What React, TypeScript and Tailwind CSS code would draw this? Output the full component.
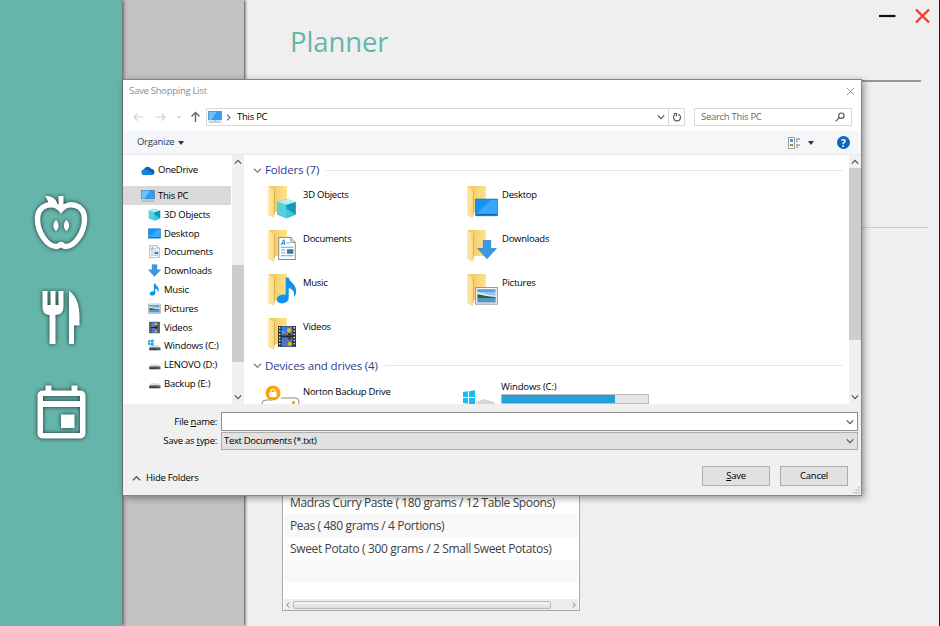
import React from "react";

type Kind = "cloud" | "pc" | "cube" | "desktop" | "doc" | "down" | "music" | "picture" | "video" | "windrive" | "drive";

function Glyph({ kind, className = "h-[14px] w-[14px]" }: { kind: Kind; className?: string }) {
  return (
    <svg viewBox="0 0 16 16" className={`shrink-0 ${className}`}>
      {kind === "cloud" && (
        <>
          <path d="M3.600 12.500a3.400 3.400 0 0 1-.3-6.600A4.600 4.600 0 0 1 11.600 5.500 3.600 3.600 0 0 1 13 12.500z" fill="#0a64b8" />
          <path d="M4 12.500a3 3 0 0 1-1-6 4 4 0 0 1 4.500.6L14.500 12 13 12.500z" fill="#1682d8" />
        </>
      )}
      {kind === "pc" && (
        <>
          <rect x="0.5" y="1.5" width="15" height="9.8" fill="#2f9df0" stroke="#4a7ea6" strokeWidth="0.7" />
          <path d="M1 2h9L4 11H1z" fill="#6cc3fb" />
          <path d="M6.5 11.5h3v1.3h-3z" fill="#b8c8d4" />
          <path d="M1 13.8h14" stroke="#7f9fb8" strokeWidth="1" />
        </>
      )}
      {kind === "cube" && (
        <>
          <path d="M8 .8 15 3v9.5L8 15.5 1 12.5V3z" fill="#22a9c4" />
          <path d="M1 3l7 2.2v10.3l-7-3z" fill="#58d0de" />
          <path d="M8 5.2 15 3v9.5l-7 3z" fill="#1498b8" />
          <path d="M8 .8 15 3 8 5.2 1 3z" fill="#b5eef2" />
          <path d="m8 8 7 4.500-7 3-7-3z" fill="#4fd0e4" opacity=".75" />
        </>
      )}
      {kind === "desktop" && (
        <>
          <rect x="0.5" y="2.2" width="15" height="11.5" fill="#1593f2" stroke="#0a70c4" strokeWidth="0.6" />
          <path d="M1 12.300 11 2.800h4.200v9.500z" fill="#37a8fa" />
          <path d="M1 13h14" stroke="#0b63af" strokeWidth=".7" />
        </>
      )}
      {kind === "doc" && (
        <>
          <path d="M2 .7h8.800L14 4v11.300H2z" fill="#fff" stroke="#888" strokeWidth=".7" />
          <path d="M10.800.7V4H14" fill="#ddd" stroke="#888" strokeWidth=".6" />
          <path d="m3.700 5.800 1.700-3.400h.4l.6 3.400M4.300 4.700h2" fill="none" stroke="#2588d4" strokeWidth=".7" />
          <path d="M7.500 4.300H10M3.600 7.200h9M3.600 9h3.300M3.600 10.800h3.300M3.600 12.800h9" stroke="#4b9bd6" strokeWidth=".6" />
          <path d="M8 8.500h4.600v2.900H8z" fill="#367ba8" />
        </>
      )}
      {kind === "down" && <path d="M5 .8h6v6.400h4.500L8 15.400.5 7.200H5z" fill="#3b98e5" stroke="#2878c0" strokeWidth=".5" />}
      {kind === "music" && (
        <path d="M7.200.5h1.700c.4 2.600 5.300 4.200 4.300 9.200-.2.8-.7 1.600-1.200 2 .7-3-.8-4.600-3-5v5.800c0 1.700-1.800 3-4 3-1.800 0-3-.9-3-2.200 0-1.700 2-3 4.100-3 .4 0 .8 0 1.100.2z" fill="#0f93ef" />
      )}
      {kind === "picture" && (
        <>
          <rect x=".5" y="2.5" width="15" height="11.5" fill="#fff" stroke="#909090" strokeWidth=".7" />
          <path d="M1.700 3.700h12.600v9H1.700z" fill="#8cc4ee" />
          <path d="M1.700 3.700h12.600v1.800H1.700z" fill="#5b9fe4" />
          <path d="M1.700 5.800c4 .2 7 2 12.600 2.300v1.500H1.700z" fill="#dcecf5" />
          <path d="M1.700 7.300c3 0 5 1.200 12.600 1.800v1H1.700z" fill="#24604f" />
          <path d="M1.700 10c4-.6 8-.2 12.600-.2v3H1.700z" fill="#5c95b6" />
        </>
      )}
      {kind === "video" && (
        <>
          <path d="M1.500 1h13v14h-13z" fill="#25272b" />
          <path d="M4 1.300h8v6.100H4zm0 7.200h8v6.200H4z" fill="#3d78dc" />
          <path d="M2.700 1.800v13M13.300 1.800v13" stroke="#e2e2e2" strokeWidth="1.100" strokeDasharray="1 1.100" />
          <path d="M4.200 4.500h2v1.400h-2z" fill="#3cc49c" />
          <path d="M6.500 5.600h2V7h-2zm0 7.400h2v1.400h-2z" fill="#e6532b" />
          <circle cx="9.600" cy="4" r="1.600" fill="#e8b814" />
          <circle cx="10" cy="12.800" r="1.400" fill="#e8b814" />
          <path d="M8.800 5.800h2v1.500h-2zM8.700 8.800h2.200v1H8.700z" fill="#3f2f22" />
        </>
      )}
      {(kind === "windrive" || kind === "drive") && (
        <>
          <path d="M3.500 7.800h9.300L15.200 11H1.500z" fill="#dadada" />
          <path d="M1.500 10.500h13.800v3.400H1.500z" fill="#3c4043" />
          <path d="M2 11.300h12.800" stroke="#777" strokeWidth=".6" />
          <path d="M12 12.300h2" stroke="#46dc55" />
        </>
      )}
      {kind === "windrive" && <path d="m0 1.700 2.800-.4v2.900H0zm3.400-.5L7 .7v3.500H3.400zM0 4.800h2.800v2.800L0 7.200zm3.400 0H7v3.400l-3.600-.5z" fill="#16aae8" />}
    </svg>
  );
}

function Folder({ kind }: { kind: Kind }) {
  const flat = kind === "desktop" || kind === "picture";
  return (
    <svg viewBox="0 0 32 36" className="mt-[-2px] h-[36px] w-[32px] shrink-0">
      <defs>
        <linearGradient id="folder-back" x1="0" x2="1">
          <stop stopColor="#eec75c" />
          <stop offset="1" stopColor="#ffe28f" />
        </linearGradient>
        <linearGradient id="folder-front" x1="0" x2="1">
          <stop stopColor="#ffeaad" />
          <stop offset="1" stopColor="#f9d97f" />
        </linearGradient>
      </defs>
      <path d="M2 2h18v26H8L2 25z" fill="url(#folder-back)" />
      <path d="m1 2 6 4v28l-6-3z" fill="url(#folder-front)" />
      <path d="M7 6.500 8 7v22l-1 3z" fill="#dcb44f" />
      <path d="M8 29h3v3l-2 1z" fill="#fff" />
      <foreignObject
        x={kind === "down" ? 11 : 9}
        y={flat ? 12 : kind === "down" ? 11 : kind === "music" ? 5 : kind === "cube" ? 14 : 8}
        width="23"
        height="28"
      >
        <Glyph
          kind={kind}
          className={
            flat
              ? "h-[23px] w-[23px]"
              : kind === "music"
                ? "h-[27px] w-[22px] scale-125"
                : kind === "cube"
                  ? "h-[21px] w-[21px]"
                  : kind === "down"
                    ? "h-[21px] w-[20px]"
                    : "h-[25px] w-[22px] scale-y-110"
          }
        />
      </foreignObject>
    </svg>
  );
}

function Chevron({ d, className, color = "#555" }: { d: "up" | "down" | "right"; className: string; color?: string }) {
  const paths = { up: "M1 7l4-4 4 4", down: "M1 3l4 4 4-4", right: "M3 1l4 4-4 4" };
  return (
    <svg viewBox="0 0 10 10" className={`shrink-0 ${className}`}>
      <path d={paths[d]} fill="none" stroke={color} strokeWidth="1.500" />
    </svg>
  );
}

const tree: [Kind, string][] = [
  ["cube", "3D Objects"],
  ["desktop", "Desktop"],
  ["doc", "Documents"],
  ["down", "Downloads"],
  ["music", "Music"],
  ["picture", "Pictures"],
  ["video", "Videos"],
  ["windrive", "Windows (C:)"],
  ["drive", "LENOVO (D:)"],
  ["drive", "Backup (E:)"],
];

const folders: [Kind, string][] = tree.slice(0, 7);

function Sidebar() {
  return (
    <nav className="z-[2] flex w-[122px] shrink-0 flex-col items-center bg-[#65b5ab] shadow-[1px_0_4px_rgba(0,0,0,0.65)]">
      <svg viewBox="0 0 60 60" className="mt-[192px] h-[60px] w-[62px] drop-shadow-[0_0_2px_rgba(0,0,0,0.75)]">
        <path d="M30 17.500C23 9 6.500 12 6.500 27c0 14 10 27.500 19 27.500 2.500 0 3-2 4.500-2s2 2 4.500 2c9 0 19-13.500 19-27.500 0-15-16.500-18-23.500-9.500z" fill="none" stroke="#fff" strokeWidth="5.500" />
        <path d="M27.500 4h5v14l-2.500 2-2.500-2z" fill="#fff" />
        <path d="M14 4c7-.5 12 3 12.500 9-5 1-10-1-10-5z" fill="#fff" />
        <path d="M25 28c3.500 3 3.500 8 0 11-3.500-3-3.500-8 0-11zm10.500 0c3.500 3 3.500 8 0 11-3.500-3-3.500-8 0-11z" fill="#fff" />
      </svg>
      <svg viewBox="0 0 40 60" className="mt-[37px] h-[60px] w-[40px] drop-shadow-[0_0_2px_rgba(0,0,0,0.75)]">
        <path d="M1.500 2h5v14h3V2h5v14h3V2h5v16c0 5-3 8-8 8v29h-6V26c-4 0-7-3-7-8zM28 2c7 4 10.500 14 10.500 25v9.500H33V55h-5z" fill="#fff" />
      </svg>
      <svg viewBox="0 0 60 60" className="mt-[34px] h-[60px] w-[60px] drop-shadow-[0_0_2px_rgba(0,0,0,0.75)]">
        <path d="M14.500 2.500h6v5h20v-5h6v5h3a5 5 0 0 1 5 5v38a5 5 0 0 1-5 5h-38a5 5 0 0 1-5-5v-38a5 5 0 0 1 5-5h3zM12 13v5h37v-5zm0 11v26h37V24z" fillRule="evenodd" fill="#fff" />
        <path d="M30 31.500h13.500v13.500H30z" fill="#fff" />
      </svg>
    </nav>
  );
}

function Planner() {
  return (
    <main className="flex min-w-0 flex-1 flex-col border-r border-[#222]">
      <header className="mr-[18px] flex h-[82px] justify-between border-b-2 border-[#9b9696]">
        <h1 className="ml-[46px] mt-[22px] text-[27.500px] font-normal leading-[40px] tracking-[-0.1px] text-[#65b5ab]">Planner</h1>
        <svg viewBox="0 0 54 18" className="mr-[-11px] mt-[7px] h-[18px] w-[54px]">
          <path d="M1 9h16.500" stroke="#111" strokeWidth="2.200" />
          <path d="m38 2.500 13 13m0-13-13 13" stroke="#f53c30" strokeWidth="2.400" />
        </svg>
      </header>
      <div className="mr-[11px] h-[146px] border-b border-[#ccc]" />
      <section className="ml-[38px] mt-[258px] flex h-[125px] w-[298px] flex-col border border-[#a9a9a9] bg-white px-px text-[12px] tracking-[-0.39px] text-[#414141]">
        <p className="h-[27px] whitespace-nowrap pl-[6px] pt-[4px] leading-[23px]">Madras Curry Paste ( 180 grams / 12 Table Spoons)</p>
        <p className="h-[23px] bg-[#f8f8f8] pl-[6px] leading-[23px]">Peas ( 480 grams / 4 Portions)</p>
        <p className="h-[23px] pl-[6px] leading-[23px] tracking-[-0.36px]">Sweet Potato ( 300 grams / 2 Small Sweet Potatos)</p>
        <p className="h-[22px] bg-[#f8f8f8]" />
        <div className="mt-auto flex h-[11px] items-center justify-between bg-[#ececec] px-[1px]">
          <Chevron d="right" color="#777" className="h-[8px] w-[6px] rotate-180" />
          <div className="ml-[2px] mr-auto h-[8px] w-[258px] rounded-[2px] border border-[#bbb] bg-linear-to-b from-[#f4f4f4] to-[#dedede]" />
          <Chevron d="right" color="#777" className="h-[8px] w-[6px]" />
        </div>
      </section>
    </main>
  );
}

function AddressBar() {
  return (
    <div className="mt-[5px] flex h-[18px] items-center pl-[10px]">
      <svg viewBox="0 0 72 14" className="h-[14px] w-[72px] shrink-0" fill="none">
        <path d="M9 7H0M3.500 3.500 0 7l3.500 3.500M22 7h9M27.500 3.500 31 7l-3.500 3.500" stroke="#cecece" strokeWidth="1.200" />
        <path d="m43 6 2 2 2-2" stroke="#bbb" />
        <path d="M61.500 12V2.500M57.500 6.500l4-4 4 4" stroke="#666" strokeWidth="1.400" />
      </svg>
      <div className="flex h-[18px] w-[479px] items-center border border-[#d9d9d9]">
        <Glyph kind="pc" className="ml-[1px] h-[14px] w-[14px]" />
        <Chevron d="right" className="ml-[3px] h-[7px] w-[7px]" />
        <span className="ml-[5px]">This PC</span>
        <Chevron d="down" className="ml-auto mr-[3px] h-[8px] w-[8px]" />
        <div className="flex h-full w-[16px] items-center justify-center border-l border-[#d9d9d9]">
          <svg viewBox="0 0 10 10" className="h-[10px] w-[10px]" fill="none" stroke="#555" strokeWidth="1.200">
            <path d="M6.300 2.200A3.500 3.500 0 1 1 3 2.600M1.800 1.500H4.500V4.300" />
          </svg>
        </div>
      </div>
      <div className="ml-[9px] flex h-[18px] w-[158px] items-center justify-between border border-[#d9d9d9] px-[6px] text-[#686868]">
        <span className="tracking-[-0.3px]">Search This PC</span>
        <svg viewBox="0 0 10 10" className="h-[10px] w-[10px]" fill="none" stroke="#555" strokeWidth="1.200">
          <circle cx="6.300" cy="3.700" r="2.700" />
          <path d="M4.300 5.700.6 9.400" />
        </svg>
      </div>
    </div>
  );
}

function Toolbar() {
  return (
    <div className="ml-[-1px] mt-[5px] flex h-[24px] items-center border-b border-[#e6e8eb] bg-[#f4f6f8] pl-[14px] text-[#1e395b]">
      <span className="tracking-[-0.3px]">Organize</span>
      <i className="ml-[4px] border-x-[3.500px] border-t-[4px] border-x-transparent border-t-[#1e395b]" />
      <svg viewBox="0 0 13 12" className="ml-auto h-[12px] w-[13px]" fill="none">
        <path d="M.5.5h6v11h-6z" fill="#fff" stroke="#999" />
        <path d="M2 2h3v3H2z" fill="#4b9ddb" />
        <path d="M2 7h1.500v2H2z" fill="#d8542f" />
        <path d="M3.500 7H5v2.500H3.500z" fill="#4ba85b" />
        <path d="M8 2h4M8 4.200h2M8 8h4M8 10h2" stroke="#777" />
      </svg>
      <i className="ml-[7px] border-x-[3.500px] border-t-[4px] border-x-transparent border-t-[#1e395b]" />
      <span className="ml-[23px] mr-[11px] flex h-[13px] w-[13px] items-center justify-center rounded-full bg-[#0b64bd] text-[10px] font-bold leading-none tracking-normal text-white">?</span>
    </div>
  );
}

function Tree() {
  return (
    <aside className="flex w-[121px] shrink-0">
      <div className="w-[109px] pt-[6px]">
        <div className="flex h-[19px] items-center pl-[18px]">
          <Glyph kind="cloud" />
          <span className="ml-[3px]">OneDrive</span>
        </div>
        <div className="mr-px mt-[6px] flex h-[19px] items-center bg-[#d9d9d9] pl-[18px]">
          <Glyph kind="pc" />
          <span className="ml-[3px] mt-px">This PC</span>
        </div>
        {tree.map(([kind, name]) => (
          <div key={name} className="flex h-[18.800px] items-center pl-[25px]">
            <Glyph kind={kind} className="h-[13px] w-[13px]" />
            <span className="ml-[3px] mt-px whitespace-nowrap tracking-[-0.2px]">{name}</span>
          </div>
        ))}
      </div>
      <div className="flex w-[12px] flex-col items-center bg-[#f0f0f0]">
        <Chevron d="up" className="mt-[3px] h-[8px] w-[8px]" />
        <div className="mt-[99px] h-[97px] w-full bg-[#cdcdcd]" />
        <Chevron d="down" className="mb-[3px] mt-auto h-[8px] w-[8px]" />
      </div>
    </aside>
  );
}

function GroupTitle({ children }: { children: React.ReactNode }) {
  return (
    <div className="flex h-[20px] items-center whitespace-nowrap text-[11.500px] tracking-[-0.15px] text-[#2c3e91]">
      <Chevron d="down" color="#888" className="mr-[3px] h-[9px] w-[9px]" />
      {children}
      <span className="ml-[7px] h-px flex-1 bg-[#e6e6e6]" />
    </div>
  );
}

function Content() {
  return (
    <div className="min-w-0 flex-1 overflow-hidden pl-[9px] pr-[6px] pt-[5px]">
      <GroupTitle>Folders (7)</GroupTitle>
      <div className="ml-[14px] mt-[6px] grid grid-cols-[199px_199px]">
        {folders.map(([kind, name]) => (
          <div key={name} className="flex h-[43.900px]">
            <Folder kind={kind} />
            <span className="ml-[4px] mt-[2px] h-[14px] leading-[14px]">{name}</span>
          </div>
        ))}
      </div>
      <div className="mt-[-6px]">
        <GroupTitle>Devices and drives (4)</GroupTitle>
      </div>
      <div className="ml-[8px] mt-px flex">
        <svg viewBox="0 0 40 28" className="h-[28px] w-[40px] shrink-0">
          <path d="M1 28v-1q0-4 4-4h6m9-2h14q4 0 4 4v3" fill="none" stroke="#888" />
          <circle cx="12" cy="16" r="7.500" fill="#f9a50b" />
          <path d="M8.500 15h7v5h-7z" fill="#fff" />
          <path d="M10 15v-1.500q2-3 4 0V15" fill="none" stroke="#fff" strokeWidth="1.200" />
          <path d="M31 24h3v3h-3z" fill="#f9a50b" />
        </svg>
        <span className="ml-[2px] mt-[8px] h-[14px] w-[159px] leading-[14px]">Norton Backup Drive</span>
        <svg viewBox="0 0 36 28" className="h-[28px] w-[36px] shrink-0">
          <path d="m1 15 5-.7V20H1zm6-.8 6-.9V20H7zM1 21h5v5.700L1 26zm6 0h6v6.700l-6-.8z" fill="#16bced" />
          <path d="m14 25 8-3 10 3 2 3H14z" fill="#d5d7db" />
        </svg>
        <div className="ml-[3px] mt-[2px] w-[148px]">
          <span className="block h-[15px] leading-[15px] tracking-[-0.12px]">Windows (C:)</span>
          <div className="h-[10px] border border-[#bcbcbc] bg-[#e6e6e6]">
            <div className="h-full w-[113px] bg-[#26a0da]" />
          </div>
        </div>
      </div>
    </div>
  );
}

function SaveDialog() {
  return (
    <div className="absolute left-[123px] top-[79px] z-[3] flex h-[417px] w-[739px] flex-col border border-l-0 border-[#858585] bg-white pl-px text-[9.500px] tracking-[-0.26px] text-black shadow-[2px_2px_7px_rgba(0,0,0,0.4)]">
      <div className="flex h-[23px] items-center justify-between pl-[5px] pr-[6px] text-[#8d8d8d]">
        <span>Save Shopping List</span>
        <svg viewBox="0 0 10 10" className="h-[9px] w-[9px]">
          <path d="m1 1 8 8m0-8-8 8" stroke="#888" />
        </svg>
      </div>
      <AddressBar />
      <Toolbar />
      <div className="ml-[-1px] flex h-[249px] overflow-hidden">
        <Tree />
        <Content />
        <div className="flex w-[12px] flex-col items-center bg-[#f0f0f0]">
          <Chevron d="up" className="mt-[3px] h-[8px] w-[8px]" />
          <div className="mt-[2px] h-[172px] w-full bg-[#cdcdcd]" />
          <Chevron d="down" className="mb-[3px] mt-auto h-[8px] w-[8px]" />
        </div>
      </div>
      <footer className="ml-[-1px] flex flex-1 flex-col bg-[#f0f0f0] pr-[3px] pt-[8px]">
        <div className="flex h-[19px] items-center">
          <label className="w-[98px] pr-[4px] pt-px text-right">File <u>n</u>ame:</label>
          <div className="flex h-[19px] flex-1 items-center justify-end border border-[#8e8e8e] bg-white pr-[3px]">
            <Chevron d="down" className="h-[8px] w-[8px]" />
          </div>
        </div>
        <div className="mt-px flex h-[18px] items-center">
          <label className="w-[98px] pr-[4px] pt-px text-right">Save as <u>t</u>ype:</label>
          <div className="flex h-[18px] flex-1 items-center justify-between border border-[#adadad] bg-[#e1e1e1] pl-[2px] pr-[3px] tracking-[-0.33px]">
            <span className="mt-px">Text Documents (*.txt)</span>
            <Chevron d="down" className="h-[8px] w-[8px]" />
          </div>
        </div>
        <div className="mt-[16px] flex h-[20px] items-center pl-[9px]">
          <Chevron d="up" className="mt-[5px] h-[9px] w-[9px]" />
          <span className="ml-[5px] mt-[5px]">Hide Folders</span>
          <button className="ml-auto h-[20px] w-[68px] border border-[#adadad] bg-[#e1e1e1]"><u>S</u>ave</button>
          <button className="ml-[10px] mr-[10px] h-[20px] w-[68px] border border-[#adadad] bg-[#e1e1e1]">Cancel</button>
        </div>
        <svg viewBox="0 0 7 7" className="ml-auto mr-[-2px] mt-[1px] h-[7px] w-[7px]" fill="#b8b8b8">
          <path d="M5 0h1.500v1.500H5zM2.500 2.500H4V4H2.500zM5 2.500h1.500V4H5zM0 5h1.500v1.500H0zM2.500 5H4v1.500H2.500zM5 5h1.500v1.500H5z" />
        </svg>
      </footer>
    </div>
  );
}

export default function App() {
  return (
    <div className="relative flex h-[626px] w-[940px] overflow-hidden bg-[#efefef] font-['Open_Sans','Noto_Sans',sans-serif]">
      <Sidebar />
      <div className="z-[1] w-[122px] shrink-0 bg-[#c2c2c2] shadow-[1px_0_3px_rgba(0,0,0,0.75)]" />
      <Planner />
      <SaveDialog />
    </div>
  );
}
